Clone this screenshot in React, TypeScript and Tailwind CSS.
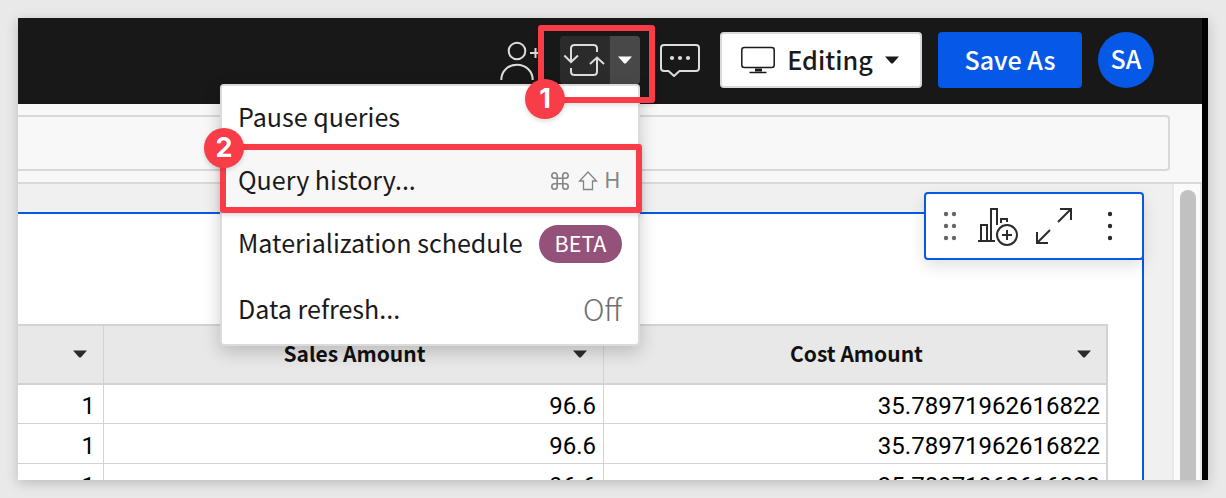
import type { ReactNode } from "react";

const sans = "font-['Noto_Sans_CJK_JP','Noto_Sans',sans-serif]";

function Caret({ className = "" }: { className?: string }) {
  return (
    <svg viewBox="0 0 14 8" className={`h-2 w-3.5 shrink-0 ${className}`} fill="currentColor">
      <path d="M0 0.5h14L8.2 7q-1.2 1-2.4 0z" />
    </svg>
  );
}

function AddUserIcon() {
  return (
    <svg viewBox="500 40 41 40" className="h-10 w-[41px] shrink-0" fill="none" stroke="#dcdcdc" strokeWidth="2">
      <circle cx="517" cy="51" r="8.3" />
      <path d="M501.3 80c0-9 7-15.300 15.700-15.300s15.700 6.300 15.700 15.300" />
      <path d="M530 53h11M535.500 48v10" />
    </svg>
  );
}

function RefreshIcon() {
  return (
    <svg viewBox="560 36 50 48" className="h-12 w-[50px]" fill="none" stroke="#dcdcdc" strokeWidth="2">
      <path d="M571 62V48.500q0-3.500 3.500-3.500h19q3.500 0 3.500 3.500V52" />
      <path d="M564.300 55.500l6.700 6.500 7-6.500" />
      <path d="M571 68v3.500q0 3.500 3.500 3.500h19q3.500 0 3.500-3.500V58" />
      <path d="M590 64l7-6.500 7 6.500" />
    </svg>
  );
}

function CommentIcon() {
  return (
    <svg viewBox="660 41 40 38" className="h-[38px] w-10 shrink-0" fill="none" stroke="#dcdcdc" strokeWidth="2" strokeLinejoin="round">
      <path d="M664 45h32q3 0 3 3v20q0 3-3 3h-16.500l-5.500 5-5.500-5H664q-3 0-3-3V48q0-3 3-3z" />
      <g fill="#dcdcdc" stroke="none">
        <circle cx="672" cy="58" r="2.100" />
        <circle cx="680" cy="58" r="2.100" />
        <circle cx="688" cy="58" r="2.100" />
      </g>
    </svg>
  );
}

function MonitorIcon() {
  return (
    <svg viewBox="741 46 34 28" className="h-7 w-[34px]" fill="none" stroke="#1a1a1a" strokeWidth="1.500">
      <rect x="741.800" y="47.500" width="32.400" height="20" rx="2.500" />
      <path d="M755 68.500h7v3h-7z" fill="#1a1a1a" stroke="none" />
      <path d="M749.500 72.500h17" />
    </svg>
  );
}

function Header() {
  return (
    <header className="flex h-[86px] shrink-0 items-center justify-end bg-[#181818] pr-12 pb-0.5">
      <AddUserIcon />
      <div className="ml-[19px] flex h-12 w-20 overflow-hidden rounded bg-[#2b2b2b]">
        <RefreshIcon />
        <div className="flex flex-1 items-center justify-center bg-[#484848] text-white">
          <Caret />
        </div>
      </div>
      <div className="ml-5">
        <CommentIcon />
      </div>
      <button className="ml-5 flex h-14 w-[202px] items-center rounded border-2 border-[#d9d9d9] bg-white pl-[19px] text-[#1a1a1a]">
        <MonitorIcon />
        <span className="ml-3 w-[86px] text-[25.2px] leading-none font-medium whitespace-nowrap">Editing</span>
        <Caret className="ml-3" />
      </button>
      <button className="ml-4 h-14 w-36 rounded bg-[#0559e6] pb-0.5 text-[25px] leading-none font-medium whitespace-nowrap text-white">Save As</button>
      <div className="ml-4 flex size-14 items-center justify-center rounded-full bg-[#0559e6] pb-1 text-[25px] leading-none font-medium text-white">SA</div>
    </header>
  );
}

function HeadCell({ label, className }: { label?: string; className: string }) {
  return (
    <div className={`flex items-center pb-0.5 ${className}`}>
      <span className="flex-1 pb-px text-center text-[21px] leading-none font-bold text-[#111]">{label}</span>
      <Caret className="text-[#2b2b2b]" />
    </div>
  );
}

const rows = [
  ["1", "96.6", "35.78971962616822"],
  ["1", "96.6", "35.78971962616822"],
  ["1", "96.6", "35.78971962616822"],
];

function DataTable() {
  return (
    <div className="mt-[108px] w-[1090px] border-t-2 border-r-2 border-[#d3d3d3]">
      <div className="flex h-[59px] border-b-2 border-[#d3d3d3] bg-[#e8e8e8]">
        <HeadCell className="w-[86px] border-r border-[#d3d3d3] pr-4" />
        <HeadCell label="Sales Amount" className="w-[500px] border-r border-[#d3d3d3] pr-4 pl-8" />
        <HeadCell label="Cost Amount" className="flex-1 pr-[15px] pl-8" />
      </div>
      {rows.map((row, i) => (
        <div key={i} className={`flex border-b border-[#d3d3d3] bg-white font-['Roboto',sans-serif] text-2xl text-black ${i === 0 ? "h-[39px] leading-[43px]" : "h-10 leading-[44px]"}`}>
          <div className="w-[86px] border-r border-[#d3d3d3] pr-2 text-right">{row[0]}</div>
          <div className="w-[500px] border-r border-[#d3d3d3] pr-[7px] text-right">{row[1]}</div>
          <div className="flex-1 pr-1.5 text-right">{row[2]}</div>
        </div>
      ))}
    </div>
  );
}

function ElementToolbar() {
  return (
    <div className="absolute top-[174px] left-[906px] h-[68px] w-[220px] rounded border-2 border-[#0559e6] bg-white shadow-[0_6px_16px_rgba(0,0,0,0.12)]">
      <svg viewBox="926 194 216 64" className="h-16 w-[216px]" fill="none" stroke="#2b2b2b" strokeWidth="2">
        <g fill="#666" stroke="none">
          <circle cx="946" cy="214" r="2.200" />
          <circle cx="954" cy="214" r="2.200" />
          <circle cx="946" cy="226" r="2.200" />
          <circle cx="954" cy="226" r="2.200" />
          <circle cx="946" cy="238" r="2.200" />
          <circle cx="954" cy="238" r="2.200" />
        </g>
        <path d="M978 241h17M981 241v-16h6v16M991 241v-32h6v16M1001 223v-4h6v3" />
        <circle cx="1007" cy="235" r="10" />
        <path d="M1002 235h10M1007 230v10" />
        <path d="M1060 209h11v11M1071 209l-13 13M1037 232v11h11M1037 243l13-13" />
        <g fill="#2b2b2b" stroke="none">
          <circle cx="1110" cy="214" r="2.200" />
          <circle cx="1110" cy="226" r="2.200" />
          <circle cx="1110" cy="238" r="2.200" />
        </g>
      </svg>
    </div>
  );
}

function MenuItem({ label, className, children }: { label: string; className: string; children?: ReactNode }) {
  return (
    <div className={`flex items-center justify-between pr-4 pl-4 ${className}`}>
      <span className="pb-[3px] text-[25.07px] leading-none whitespace-nowrap">{label}</span>
      {children}
    </div>
  );
}

function ShortcutKeys() {
  return (
    <span className="flex items-center pb-px text-[#858585]">
      <svg viewBox="-1 -1 20 20" className="size-5" fill="none" stroke="currentColor" strokeWidth="1.600">
        <path d="M6.200 6.200H3.500A2.700 2.700 0 1 1 6.200 3.500v11A2.700 2.700 0 1 1 3.500 11.800h11a2.700 2.700 0 1 1-2.700 2.700v-11a2.700 2.700 0 1 1 2.700 2.700z" />
      </svg>
      <svg viewBox="0 0 20 20" className="ml-2 size-5" fill="none" stroke="currentColor" strokeWidth="1.300">
        <path d="M10 1l8.500 9h-4v8.500h-9V10h-4z" />
      </svg>
      <span className="mr-0.5 ml-1.5 font-['Inter',sans-serif] text-[21px] leading-none">H</span>
    </span>
  );
}

function QueryMenu() {
  return (
    <div className="absolute top-[66px] left-[202px] h-[262px] w-[420px] rounded border-2 border-[#dbdbdb] bg-white text-[#1a1a1a] shadow-[0_6px_18px_rgba(0,0,0,0.2)]">
      <MenuItem label="Pause queries" className="h-16" />
      <MenuItem label="Query history..." className="h-[62px] bg-[#f7f7f7]">
        <ShortcutKeys />
      </MenuItem>
      <MenuItem label="Materialization schedule" className="h-16">
        <span className="flex h-[38px] w-[83px] items-center justify-center rounded-full bg-[#94527b] pb-[3px] text-[21.5px] leading-none text-white">BETA</span>
      </MenuItem>
      <MenuItem label="Data refresh..." className="h-[68px]">
        <span className="pb-[3px] text-[29.5px] leading-none font-light text-[#6e6e6e]">Off</span>
      </MenuItem>
    </div>
  );
}

function Badge({ value, className }: { value: number; className: string }) {
  return (
    <div className={`absolute flex size-10 items-center justify-center rounded-full bg-[#f83c48] pb-0.5 font-['Inter',sans-serif] text-[27px] leading-none font-bold text-white shadow-[0_2px_5px_rgba(0,0,0,0.15)] ${className}`}>
      {value}
    </div>
  );
}

export default function App() {
  return (
    <div className={`h-[498px] w-[1226px] overflow-hidden bg-[#e9e9e9] p-[18px] ${sans}`}>
      <div className="relative h-[462px] w-[1190px] shadow-[0_3px_12px_rgba(0,0,0,0.2)]">
        <div className="flex h-full flex-col overflow-hidden border-r-[6px] border-black bg-[#f8f8f8]">
          <Header />
          <div className="h-20 shrink-0 border-b-2 border-[#d9d9d9] pt-[11px]">
            <div className="h-14 w-[1152px] rounded-r border-2 border-l-0 border-[#d9d9d9]" />
          </div>
          <div className="flex min-h-0 flex-1">
            <div className="w-[1154px] overflow-hidden bg-[#f0f0f0] pt-7">
              <div className="h-[300px] w-[1126px] border-t-2 border-r-2 border-[#0559e6] bg-white pt-0.5">
                <DataTable />
              </div>
            </div>
            <div className="flex-1 border-x-2 border-[#e8e8e8] bg-[#fafafa] pt-1.5 pl-1.5">
              <div className="h-[320px] w-4 rounded-full bg-[#c1c1c1]" />
            </div>
          </div>
        </div>
        <ElementToolbar />
        <QueryMenu />
        <div className="absolute top-[7px] left-[520px] h-[78px] w-[117px] rounded-[3px] border-[6px] border-[#f83c48] shadow-[0_2px_5px_rgba(0,0,0,0.12)]" />
        <div className="absolute top-[126px] left-[202px] h-[69px] w-[422px] rounded-[3px] border-[6px] border-[#f83c48] shadow-[0_2px_5px_rgba(0,0,0,0.15)]" />
        <Badge value={1} className="top-[61px] left-[507px]" />
        <Badge value={2} className="top-[110px] left-[186px]" />
      </div>
    </div>
  );
}
